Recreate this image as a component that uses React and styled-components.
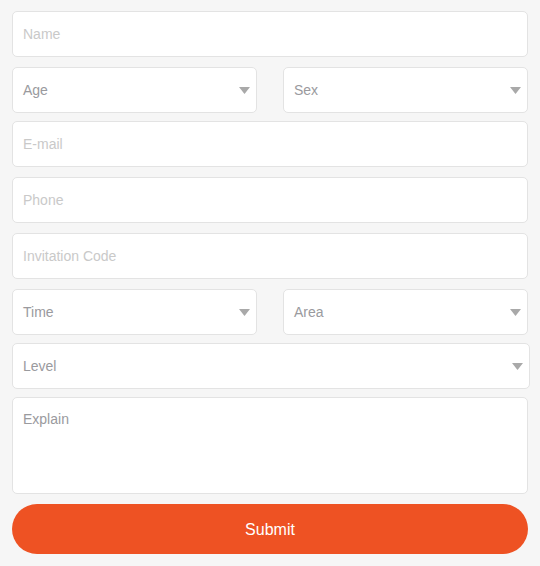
import React from "react";
import styled, { createGlobalStyle } from "styled-components";

const Global = createGlobalStyle`
  html, body { margin: 0; padding: 0; background: #f6f6f6; }
  body { font-family: "Liberation Sans", Arial, sans-serif; }
  * { box-sizing: border-box; }
`;

const Form = styled.form`
  display: flex;
  flex-direction: column;
  width: 516px;
  padding: 0;
  margin: 11px 0 0 12px;
`;

const Row = styled.div`
  display: flex;
  gap: 26px;
  margin-top: ${(p) => p.$mt || 0}px;
`;

const TextInput = styled.input`
  display: block;
  width: 516px;
  height: 46px;
  margin: ${(p) => p.$mt || 0}px 0 0 0;
  padding: 0 10px;
  border: 1px solid #e3e3e3;
  border-radius: 5px;
  background: #fff;
  font-family: "Liberation Sans", Arial, sans-serif;
  font-size: 14px;
  color: #333;
  outline: none;
  &::placeholder { color: #c9c9c9; }
`;

const SelectBox = styled.div`
  display: flex;
  align-items: center;
  justify-content: space-between;
  width: ${(p) => p.$w}px;
  height: 46px;
  margin-top: ${(p) => p.$mt || 0}px;
  padding: 0 6px 0 10px;
  border: 1px solid #e3e3e3;
  border-radius: 5px;
  background: #fff;
`;

const SelectLabel = styled.span`
  font-size: 14px;
  color: #9a9a9e;
`;

const Caret = styled.svg`
  width: 11px;
  height: 7px;
  display: block;
`;

const TextArea = styled.textarea`
  display: block;
  width: 516px;
  height: 97px;
  margin-top: 8px;
  padding: 13px 10px;
  border: 1px solid #e3e3e3;
  border-radius: 5px;
  background: #fff;
  font-family: "Liberation Sans", Arial, sans-serif;
  font-size: 14px;
  resize: none;
  outline: none;
  &::placeholder { color: #9a9a9e; }
`;

const Submit = styled.button`
  display: block;
  width: 516px;
  height: 50px;
  margin-top: 10px;
  padding: 2px 0 0;
  border: none;
  border-radius: 25px;
  background: #ee5223;
  color: #fff;
  font-family: "Liberation Sans", Arial, sans-serif;
  font-size: 16px;
  cursor: pointer;
`;

function Select({ label, w, mt }) {
  return (
    <SelectBox $w={w} $mt={mt}>
      <SelectLabel>{label}</SelectLabel>
      <Caret viewBox="0 0 11 7">
        <polygon points="0,0 11,0 5.5,7" fill="#a9a9a9" />
      </Caret>
    </SelectBox>
  );
}

export default function App() {
  return (
    <>
      <Global />
      <Form onSubmit={(e) => e.preventDefault()}>
        <TextInput placeholder="Name" />
        <Row $mt={10}>
          <Select label="Age" w={245} />
          <Select label="Sex" w={245} />
        </Row>
        <TextInput placeholder="E-mail" $mt={8} />
        <TextInput placeholder="Phone" $mt={10} />
        <TextInput placeholder="Invitation Code" $mt={10} />
        <Row $mt={10}>
          <Select label="Time" w={245} />
          <Select label="Area" w={245} />
        </Row>
        <Select label="Level" w={518} mt={8} />
        <TextArea placeholder="Explain" />
        <Submit type="submit">Submit</Submit>
      </Form>
    </>
  );
}
